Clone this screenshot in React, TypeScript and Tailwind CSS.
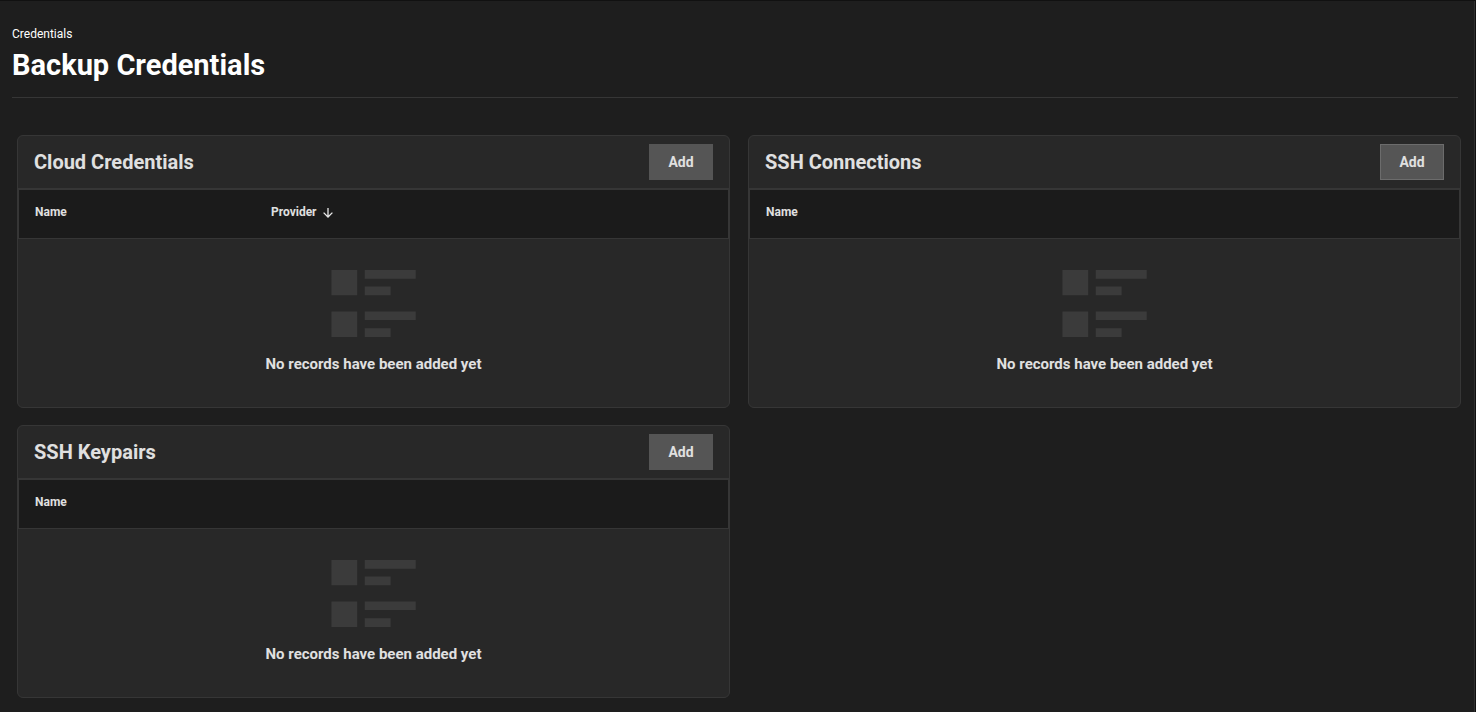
import React from "react";

type Column = { label: string; width?: string; sorted?: boolean };

type CardProps = { title: string; columns: Column[]; focused?: boolean };

function SortArrow() {
  return (
    <svg width="10" height="12" viewBox="0 0 10 12" fill="none" stroke="#e8e8e8" strokeWidth="1.3" aria-hidden="true">
      <path d="M5 2V11M0.6 6.6L5 11L9.4 6.6" />
    </svg>
  );
}

function EmptyIcon() {
  return (
    <svg width="86" height="68" viewBox="0 0 86 68" fill="#3b3b3b" aria-hidden="true">
      <path d="M0.4 0H26.2V25.2H0.4ZM33.7 0H84.7V8.8H33.7ZM33.7 16.5H59.6V25.2H33.7Z" />
      <path d="M0.4 41.6H26.2V67H0.4ZM33.7 41.6H84.7V50H33.7ZM33.7 58.2H59.6V67H33.7Z" />
    </svg>
  );
}

function CredentialCard({ title, columns, focused }: CardProps) {
  return (
    <section className="overflow-hidden rounded-md border border-[#363636] bg-[#282828]">
      <header className="flex items-center justify-between border-b border-[#363636] px-4 py-2">
        <h2 className="text-xl font-bold text-[#e0e0e0]">{title}</h2>
        <button
          type="button"
          className={
            focused
              ? "h-9 w-16 border border-[#6c6c6c] bg-[#555555] text-sm font-bold text-[#e0e0e0]"
              : "h-9 w-16 border border-[#555555] bg-[#555555] text-sm font-bold text-[#e0e0e0]"
          }
        >
          Add
        </button>
      </header>
      <table className="w-full table-fixed border-separate border-spacing-0">
        <thead>
          <tr>
            {columns.map((column) => (
              <th
                key={column.label}
                scope="col"
                className={`h-[50px] border-y border-[#363636] bg-[#1b1b1b] pb-1 pl-4 text-left text-xs font-bold text-[#e0e0e0] first:border-l last:border-r ${column.width ?? ""}`}
              >
                <span className="inline-flex items-center gap-1.5">
                  {column.label}
                  {column.sorted && <SortArrow />}
                </span>
              </th>
            ))}
          </tr>
        </thead>
        <tbody>
          <tr>
            <td colSpan={columns.length} className="p-0">
              <div className="flex flex-col items-center pt-[31px] pb-[31px]">
                <EmptyIcon />
                <p className="mt-[14px] text-[15px] leading-6 font-bold text-[#e0e0e0]">
                  No records have been added yet
                </p>
              </div>
            </td>
          </tr>
        </tbody>
      </table>
    </section>
  );
}

export default function App() {
  return (
    <main className="min-h-screen border-t border-r border-[#111111] bg-[#1e1e1e] font-['Roboto',sans-serif]">
      <div className="min-h-[calc(100vh-1px)] border-r border-[#303030] pt-6 pr-[13px] pb-3 pl-3">
        <div className="mr-[3px] border-b border-[#363636] pb-3">
          <p className="text-xs leading-[18px] text-white">Credentials</p>
          <h1 className="mt-0.5 text-[29px] leading-10 font-bold text-white">Backup Credentials</h1>
        </div>
        <div className="grid grid-cols-2 items-start gap-x-[18px] gap-y-[17px] pt-[37px] pl-[5px]">
          <CredentialCard
            title="Cloud Credentials"
            columns={[{ label: "Name", width: "w-1/3" }, { label: "Provider", sorted: true }]}
          />
          <CredentialCard title="SSH Connections" columns={[{ label: "Name" }]} focused />
          <CredentialCard title="SSH Keypairs" columns={[{ label: "Name" }]} />
        </div>
      </div>
    </main>
  );
}
